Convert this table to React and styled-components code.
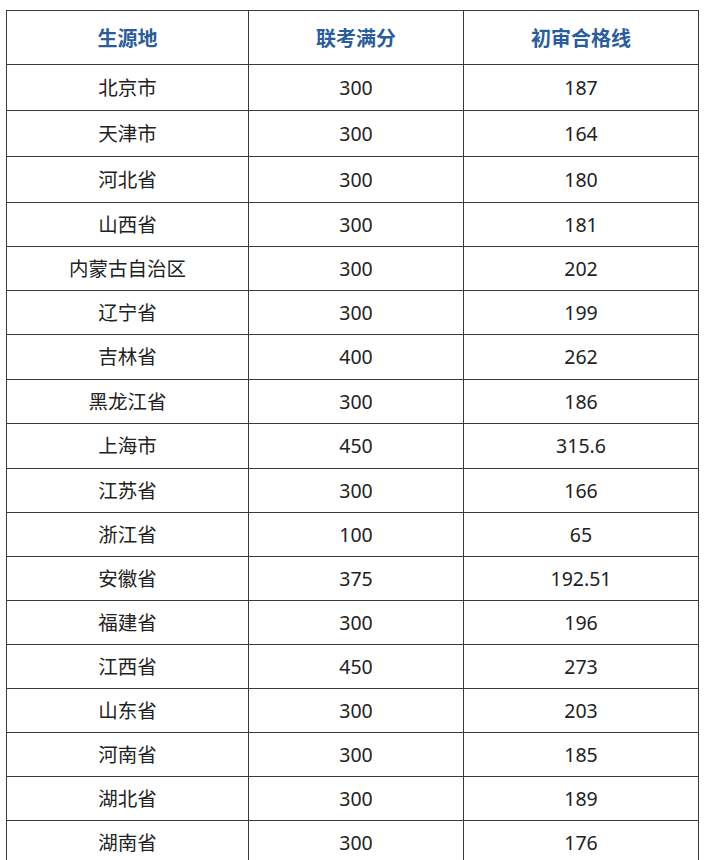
import React from 'react'
import styled, { createGlobalStyle } from 'styled-components'

const GlobalStyle = createGlobalStyle`
  body {
    margin: 0;
    background: #fff;
    font-family: "Noto Sans", "Noto Sans CJK SC", sans-serif;
  }
`

const Page = styled.div`
  padding: 10px 0 0 6px;
`

const Table = styled.table`
  border-collapse: collapse;
  table-layout: fixed;
  width: 692px;
`

const Col = styled.col`
  width: ${({ w }) => w}px;
`

const HeadCell = styled.th`
  height: 53px;
  padding: 0;
  border: 1px solid #3a3a3a;
  color: #2b5c9b;
  font-size: 20px;
  font-weight: 700;
  text-align: center;
  vertical-align: middle;
`

const Cell = styled.td`
  height: ${({ h }) => h - 1}px;
  padding: 0;
  border: 1px solid #3a3a3a;
  color: #222;
  font-size: 19.5px;
  line-height: 1;
  text-align: center;
  vertical-align: middle;
`

const rows = [
  ['北京市', '300', '187', 46],
  ['天津市', '300', '164', 46],
  ['河北省', '300', '180', 46],
  ['山西省', '300', '181', 44],
  ['内蒙古自治区', '300', '202', 44],
  ['辽宁省', '300', '199', 44],
  ['吉林省', '400', '262', 45],
  ['黑龙江省', '300', '186', 44],
  ['上海市', '450', '315.6', 45],
  ['江苏省', '300', '166', 44],
  ['浙江省', '100', '65', 44],
  ['安徽省', '375', '192.51', 44],
  ['福建省', '300', '196', 44],
  ['江西省', '450', '273', 44],
  ['山东省', '300', '203', 44],
  ['河南省', '300', '185', 44],
  ['湖北省', '300', '189', 44],
  ['湖南省', '300', '176', 44]
]

export default function App () {
  return <Page>
    <GlobalStyle />
    <Table>
      <colgroup>
        <Col w={242} />
        <Col w={215} />
        <Col w={235} />
      </colgroup>
      <thead>
        <tr>
          <HeadCell>生源地</HeadCell>
          <HeadCell>联考满分</HeadCell>
          <HeadCell>初审合格线</HeadCell>
        </tr>
      </thead>
      <tbody>
        {rows.map(([place, full, line, h]) => (
          <tr key={place}>
            <Cell h={h}>{place}</Cell>
            <Cell h={h}>{full}</Cell>
            <Cell h={h}>{line}</Cell>
          </tr>
        ))}
      </tbody>
    </Table>
  </Page>
}
